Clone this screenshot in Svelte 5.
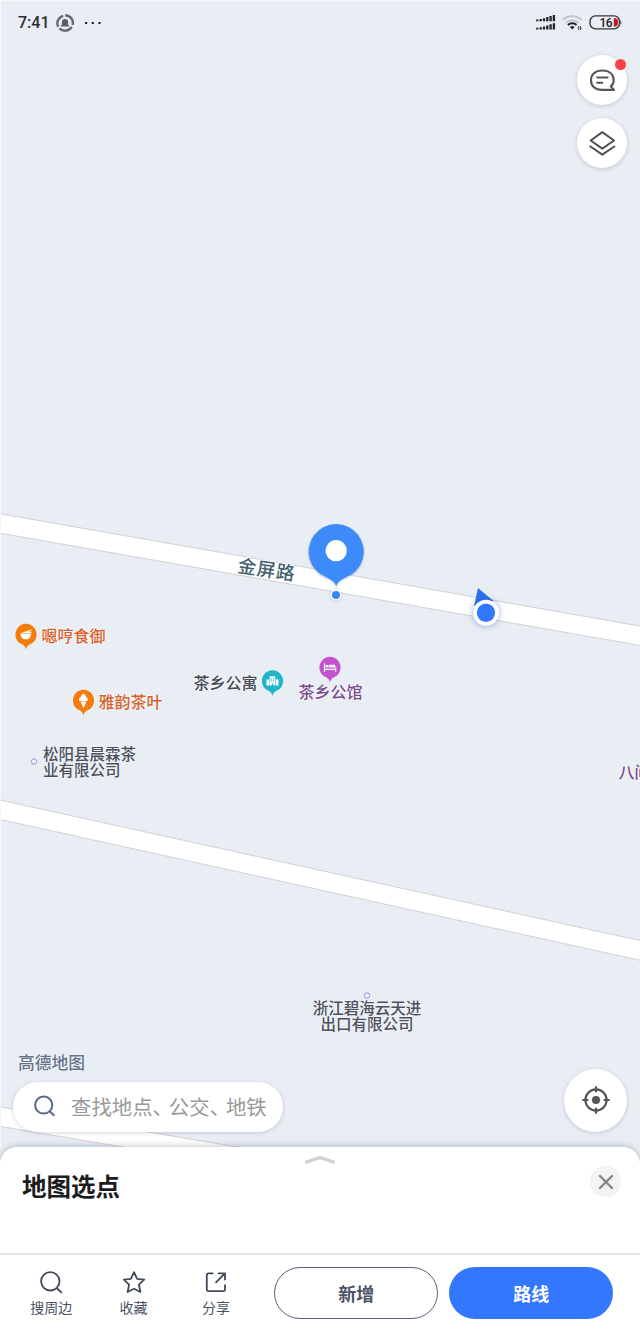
<script>
	const roads = [
		{ fill: 'M-2 513.4L642 626.4V645.8L-2 532.8Z', edge: 'M-2 513.4L642 626.4M642 645.8L-2 532.8' },
		{ fill: 'M-2 799.6L642 941V960.7L-2 819Z', edge: 'M-2 799.6L642 941M642 960.7L-2 819' },
		{ fill: 'M-2 1106.7L258 1150.5V1170L-2 1126Z', edge: 'M-2 1106.7L258 1150.5M258 1170L-2 1126' }
	];

	const places = [
		{ x: 26, y: 634.5, kind: 'bowl', color: '#f57c0a', name: '嗯哼食御', tx: 41.5, ty: 642, text: '#d9622b' },
		{ x: 83.5, y: 700.5, kind: 'cone', color: '#f57c0a', name: '雅韵茶叶', tx: 98.5, ty: 708, text: '#d9622b' },
		{ x: 272.5, y: 681, kind: 'tower', color: '#1fb5c9', name: '茶乡公寓', tx: 193.5, ty: 688.5, text: '#454a55' },
		{ x: 330, y: 667.5, kind: 'bed', color: '#c453cf', name: '茶乡公馆', tx: 298.5, ty: 698, text: '#7b4a8f' }
	];

	const companies = [
		{ x: 34, y: 761.5, tx: 43, anchor: 'start', lines: ['松阳县晨霖茶', '业有限公司'], ty: 759.5 },
		{ x: 367, y: 995.5, tx: 367, anchor: 'middle', lines: ['浙江碧海云天进', '出口有限公司'], ty: 1013.5 }
	];
</script>

<div class="screen">
	<svg class="map" width="640" height="1160" viewBox="0 0 640 1160">
		{#each roads as road}
			<path d={road.fill} fill="#fff" />
			<path d={road.edge} fill="none" stroke="#d0d2d6" />
		{/each}

		<text class="road-name" x="237" y="572" transform="rotate(8.5 237 572)">金屏路</text>

		{#each places as place}
			<g transform="translate({place.x} {place.y})">
				<path
					d="M0 14.8C-.7 12.6-1.4 11.4-3.4 10A10.6 10.6 0 1 1 3.4 10C1.4 11.4.7 12.6 0 14.8Z"
					fill={place.color}
				/>
				{#if place.kind === 'bowl'}
					<path d="M-5.7-1H5.2C5 2 3.7 3.8 2 4.8H-2C-4 3.8-5.4 2-5.7-1ZM-4.8-1.6L5.4-4.9V-4.1L2.5-2.6L5.4-2.8V-1.6Z" fill="#fff" />
				{:else if place.kind === 'cone'}
					<path d="M-4.2 .6C-5.2-1.6-3.9-3-2.8-3.3C-2.6-5.1-.8-6.3 0-7C1-6.3 2.7-5 2.8-3.3C4.4-2.6 5-.9 4 .6ZM-3 1.1H3L.4 7H-.4Z" fill="#fff" />
				{:else if place.kind === 'tower'}
					<path d="M-6-1.5H-3.3V4.5H-6ZM3.3-1.5H6V4.5H3.3ZM-2.8-4.8H2.8V4.5H.8V2.4H-.8V4.5H-2.8Z" fill="#fff" />
					<path d="M-1.2-3V1M1.2-3V1" stroke={place.color} stroke-width=".7" />
				{:else}
					<path d="M-5.5-4V4.2M-5.5 1.9H5.7V4.2M5.7 1.9V0" fill="none" stroke="#fff" stroke-width="1.2" />
					<path d="M-4.2-2.6H-1.5V0H-4.2ZM-.8-2.8H4.8L5.6 0H-.8Z" fill="#fff" />
				{/if}
			</g>
			<text class="place" x={place.tx} y={place.ty} fill={place.text}>{place.name}</text>
		{/each}

		{#each companies as company}
			<circle cx={company.x} cy={company.y} r="2.7" fill="#f1f4fd" stroke="#8796dc" />
			<text class="company" text-anchor={company.anchor}>
				{#each company.lines as line, i}
					<tspan x={company.tx} y={company.ty + i * 16}>{line}</tspan>
				{/each}
			</text>
		{/each}

		<text class="place" x="618.5" y="777.5" fill="#7b4a8f">八间</text>

		<!-- current position -->
		<path d="M478 588L493.5 601L474 606Z" fill="#2e6fee" />
		<circle class="halo" cx="486" cy="612.8" r="13" fill="#fff" />
		<circle cx="486" cy="612.8" r="9.2" fill="#3377ff" />

		<!-- picked point -->
		<path
			class="pin"
			d="M336.2 586.5C335.3 582 332 580.2 326.5 577.3A27.5 27.5 0 1 1 345.9 577.3C340.4 580.2 337.1 582 336.2 586.5Z"
			fill="#3d8afa"
		/>
		<circle cx="336.2" cy="550.7" r="10.6" fill="#fff" />
		<circle class="dot" cx="336" cy="595" r="5.5" fill="#fff" />
		<circle cx="336" cy="595" r="4" fill="#3687f5" />
	</svg>

	<div class="overlay">
		<header class="status">
			<span class="time">7:41</span>
			<svg width="18" height="18" viewBox="0 0 18 18">
				<path d="M2.2 12.8A7.8 7.8 0 0 1 7.2 1.8M9.2 1.2A7.8 7.8 0 0 1 16.6 11M15.7 12.8A7.8 7.8 0 0 1 3.4 14.4" fill="none" stroke="#666a70" stroke-width="2.4" />
				<path d="M4.9 12.6V11.7L5.9 10.5V8A3.1 3.1 0 0 1 12.1 8V10.5L13.1 11.7V12.6Z" fill="#5c6066" />
			</svg>
			<svg class="more" width="18" height="4" viewBox="0 0 18 4">
				<path d="M1 1H3.2V3H1ZM7.7 1H9.9V3H7.7ZM14.4 1H16.6V3H14.4Z" fill="#25282d" />
			</svg>
			<svg class="signal" width="21" height="17" viewBox="0 0 21 17">
				<path d="M2.3 7.2V5.6M5.7 7.2V5M9 7.2V4.2M12.3 7.2V3M15.6 7.2V2M18.9 7.2V1M2.3 15.6V13.8M5.7 15.6V13.2M9 15.6V12.4M12.3 15.6V11.4M15.6 15.6V10.2M18.9 15.6V9.2" stroke="#202328" stroke-width="2.3" />
			</svg>
			<svg class="wifi" width="21" height="17" viewBox="0 0 21 17">
				<path d="M1 6A13 13 0 0 1 19.5 6M3.8 8.9A9.5 9.5 0 0 1 16.7 8.9" fill="none" stroke="#bfc2c8" stroke-width="1.9" />
				<path d="M6 11A6 6 0 0 1 14.5 11" fill="none" stroke="#202328" stroke-width="2.2" />
				<path d="M7.9 13.1A3.5 3.5 0 0 1 12.6 13.1L10.3 15.4Z" fill="#202328" />
				<path d="M16.7 16V12.4L15.6 13.6M18.5 12V15.6L19.6 14.4" fill="none" stroke="#303338" stroke-width=".9" />
			</svg>
			<svg class="battery" width="33" height="16" viewBox="0 0 33 16">
				<rect x="1" y=".9" width="29.5" height="13" rx="5.5" fill="none" stroke="#33363b" stroke-width="1.4" />
				<path d="M31.4 5Q33.2 7.4 31.4 9.8Z" fill="#33363b" />
				<path d="M24.8 2.9C27.7 2.9 29.1 4.1 29.1 7.3S27.7 11.8 24.8 11.8Z" fill="#d0161b" />
				<text x="16.8" y="11.5" text-anchor="middle">16</text>
			</svg>
		</header>

		<div class="tools">
			<button class="round" aria-label="消息">
				<svg width="28" height="28" viewBox="0 0 28 28">
					<path d="M22.8 20.4L26 23.9H14C7 23.9 3 20 3 14.2S7 4.5 14.3 4.5S25.7 8.4 25.7 14.2C25.7 17 24.6 19 22.8 20.4Z" fill="none" stroke="#555" stroke-width="2.1" stroke-linejoin="round" />
					<path d="M8.4 11.5H20.4M8.4 16.7H15" stroke="#555" stroke-width="2.1" />
				</svg>
				<span class="badge"></span>
			</button>
			<button class="round" aria-label="图层">
				<svg width="28" height="28" viewBox="0 0 28 28">
					<path d="M14.3 3.2L26 11.5L14.3 19.7L2.7 11.5ZM1.7 17L14.3 25.6L27 17" fill="none" stroke="#505357" stroke-width="2.1" stroke-linejoin="round" />
				</svg>
			</button>
		</div>

		<div class="map-foot">
			<div>
				<div class="brand">高德地图</div>
				<div class="search">
					<svg width="22" height="22" viewBox="0 0 22 22">
						<path d="M18.3 10A8.6 8.6 0 1 1 1.1 10A8.6 8.6 0 0 1 18.3 10ZM15.7 16.2L20.3 20.8" fill="none" stroke="#5a6885" stroke-width="2" />
					</svg>
					<span class="hint">查找地点<i>、</i>公交<i>、</i>地铁</span>
				</div>
			</div>
			<button class="round locate" aria-label="定位">
				<svg width="28" height="28" viewBox="0 0 28 28">
					<circle cx="14" cy="14" r="10.6" fill="none" stroke="#555" stroke-width="2.2" />
					<circle cx="14" cy="14" r="4" fill="#555" />
					<path d="M14 .3V6.3M14 21.7V27.7M.3 14H6.3M21.7 14H27.7" stroke="#555" stroke-width="2.2" />
				</svg>
			</button>
		</div>
	</div>

	<section class="sheet">
		<svg class="handle" width="32" height="10" viewBox="0 0 32 10">
			<path d="M2.5 7L16 2.6L29.5 7" fill="none" stroke="#d0d0d0" stroke-width="3.4" stroke-linecap="round" stroke-linejoin="round" />
		</svg>
		<div class="sheet-head">
			<h1>地图选点</h1>
			<button class="close" aria-label="关闭">
				<svg width="16" height="16" viewBox="0 0 16 16">
					<path d="M2 2L14 14M14 2L2 14" stroke="#858585" stroke-width="2.4" stroke-linecap="round" />
				</svg>
			</button>
		</div>
	</section>

	<footer>
		<button class="action">
			<svg width="24" height="24" viewBox="0 0 24 24">
				<path d="M20.5 11.3A9.2 9.2 0 1 1 2.1 11.3A9.2 9.2 0 0 1 20.5 11.3ZM17.7 18L22.7 22.8" />
			</svg>
			搜周边
		</button>
		<button class="action">
			<svg width="24" height="24" viewBox="0 0 24 24">
				<path d="M12 2.2L15.1 8.9L22.2 9.7L16.9 14.7L18.4 22L12 18.7L5.6 22L7.1 14.7L1.8 9.7L8.9 8.9Z" />
			</svg>
			收藏
		</button>
		<button class="action">
			<svg width="24" height="24" viewBox="0 0 24 24">
				<path d="M9.5 3.3H4.6Q2.8 3.3 2.8 5.1V19.3Q2.8 21.1 4.6 21.1H19.2Q21 21.1 21 19.3V14.4M13.8 3.3H21V10.2M20.8 3.5L11.5 12.9" />
			</svg>
			分享
		</button>
		<button class="pill">新增</button>
		<button class="pill primary">路线</button>
	</footer>
</div>

<style>
	:global(body) {
		background: #fff;
	}
	.screen {
		position: relative;
		display: flex;
		flex-direction: column;
		width: 640px;
		height: 1332px;
		overflow: hidden;
		background: #e9edf4;
		font-family: "Noto Sans CJK SC", sans-serif;
	}
	button {
		padding: 0;
		border: none;
		background: none;
		font-family: inherit;
		cursor: pointer;
	}
	svg {
		display: block;
		flex-shrink: 0;
	}
	.map {
		position: absolute;
		top: 0;
		left: 0;
	}
	.map text {
		paint-order: stroke;
		stroke: #f4f6fa;
		stroke-width: 2px;
		stroke-linejoin: round;
		font-weight: 500;
	}
	.place {
		font-size: 16px;
	}
	.map .company {
		font-size: 15.5px;
		fill: #4b505c;
		stroke-width: 1px;
	}
	.map .road-name {
		font-size: 18.5px;
		letter-spacing: 0.8px;
		fill: #426270;
		stroke: #fff;
	}
	.halo {
		filter: drop-shadow(0 0 3px rgba(40, 80, 190, 0.5));
	}
	.pin {
		filter: drop-shadow(0 1px 1px rgba(30, 70, 150, 0.35));
	}
	.dot {
		filter: drop-shadow(0 0 1px rgba(30, 70, 150, 0.3));
	}

	.overlay {
		position: relative;
		display: flex;
		flex-direction: column;
		height: 1147px;
		box-sizing: border-box;
		border-top: 1px solid #f5f7fa;
		border-left: 1px solid #f5f7fa;
	}
	.status {
		display: flex;
		align-items: center;
		height: 43px;
		padding: 0 18px 0 17px;
	}
	.time {
		width: 38px;
		font-family: Roboto, sans-serif;
		font-size: 16px;
		font-weight: 500;
		color: #2c2f34;
	}
	.more {
		margin-left: 10px;
	}
	.signal {
		margin-left: auto;
	}
	.wifi {
		margin-left: 6px;
	}
	.battery {
		margin-left: 6px;
	}
	.battery text {
		font-family: Roboto, sans-serif;
		font-size: 12px;
		font-weight: 500;
		letter-spacing: -0.5px;
		fill: #202328;
	}
	.tools {
		display: flex;
		flex-direction: column;
		align-items: flex-end;
		gap: 13px;
		padding: 11px 13px 0 0;
	}
	.round {
		position: relative;
		display: flex;
		align-items: center;
		justify-content: center;
		width: 50px;
		height: 50px;
		border-radius: 50%;
		background: #fff;
		box-shadow: 0 1px 4px rgba(60, 70, 90, 0.22);
	}
	.badge {
		position: absolute;
		top: 4px;
		right: 1px;
		width: 11px;
		height: 11px;
		border-radius: 50%;
		background: #ff4048;
	}
	.map-foot {
		display: flex;
		align-items: flex-end;
		justify-content: space-between;
		margin-top: auto;
		padding: 0 13px 15.5px 12px;
	}
	.brand {
		margin: 0 0 7.5px 5px;
		font-size: 16.8px;
		line-height: 24px;
		font-weight: 500;
		color: #66728c;
		text-shadow: 0 0 2px #fff, 0 0 1px #fff;
	}
	.search {
		display: flex;
		align-items: center;
		gap: 15px;
		box-sizing: border-box;
		width: 270px;
		height: 50px;
		padding: 0 0 2px 21px;
		border-radius: 25px;
		background: #fff;
		box-shadow: 0 1px 4px rgba(60, 70, 90, 0.2);
	}
	.hint {
		font-size: 20.4px;
		color: #999;
		white-space: nowrap;
	}
	.hint i {
		display: inline-block;
		width: 16.3px;
		font-style: normal;
	}
	.locate {
		width: 63px;
		height: 63px;
	}
	.locate svg {
		margin-bottom: 1px;
	}

	.sheet {
		position: relative;
		height: 106px;
		border-radius: 17px 17px 0 0;
		background: #fff;
		box-shadow: 0 -1px 6px rgba(60, 70, 90, 0.3);
	}
	.handle {
		margin: 0 auto;
		padding-top: 8px;
	}
	.sheet-head {
		display: flex;
		align-items: flex-start;
		justify-content: space-between;
		padding: 1px 19px 0 22px;
	}
	h1 {
		margin: 0;
		font-size: 24.5px;
		line-height: 40px;
		font-weight: 700;
		color: #1c1c1e;
	}
	.close {
		display: flex;
		align-items: center;
		justify-content: center;
		width: 31px;
		height: 31px;
		border-radius: 50%;
		background: #f3f3f3;
	}

	footer {
		position: relative;
		display: flex;
		align-items: flex-start;
		box-sizing: border-box;
		height: 79px;
		padding: 12px 0 0 10px;
		border-top: 2px solid #e6e6e8;
		background: #fff;
	}
	.action {
		display: flex;
		flex-direction: column;
		align-items: center;
		gap: 2px;
		width: 82.4px;
		padding-top: 3px;
		font-size: 14px;
		line-height: 22px;
		color: #4a5366;
	}
	.action path {
		fill: none;
		stroke: #424a5b;
		stroke-width: 1.8;
		stroke-linejoin: round;
	}
	.pill {
		box-sizing: border-box;
		width: 164.5px;
		height: 52px;
		padding-bottom: 1px;
		margin-left: 16.8px;
		border: 1px solid #59627a;
		border-radius: 26px;
		font-size: 18px;
		font-weight: 700;
		color: #4b5468;
	}
	.pill.primary {
		margin-left: 10.5px;
		border: none;
		background: #3377ff;
		color: #fff;
	}
</style>
